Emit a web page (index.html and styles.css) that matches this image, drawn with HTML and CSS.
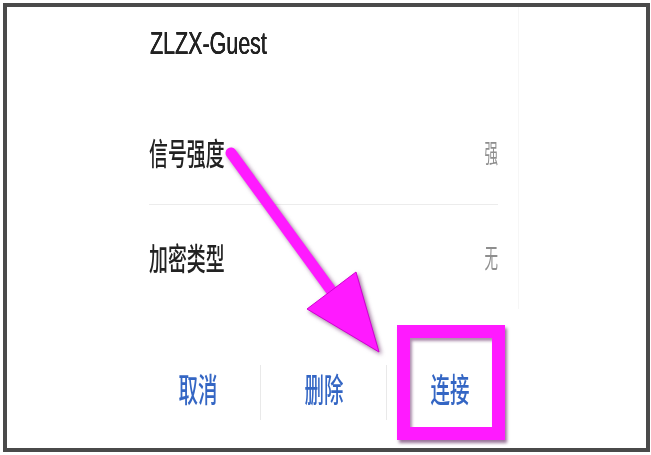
FILE: index.html
```html
<!DOCTYPE html>
<html lang="zh">
<head>
<meta charset="utf-8">
<title>ZLZX-Guest</title>
<link rel="stylesheet" href="styles.css">
</head>
<body>
<div class="frame">
  <div class="dialog">
    <div class="info">
      <div class="title"><span class="title-text">ZLZX-Guest</span></div>
      <div class="row row-first">
        <span class="label">信号强度</span>
        <span class="value">强</span>
      </div>
      <div class="divider"></div>
      <div class="row row-second">
        <span class="label">加密类型</span>
        <span class="value">无</span>
      </div>
    </div>
    <div class="buttons">
      <div class="btn"><span class="btn-text">取消</span></div>
      <div class="btn"><span class="btn-text">删除</span></div>
      <div class="btn btn-last"><span class="btn-text">连接</span></div>
    </div>
  </div>
  <svg class="arrow" width="639" height="441" viewBox="0 0 639 441">
    <line x1="224" y1="146" x2="326" y2="286" stroke="#ff1aff" stroke-width="11" stroke-linecap="round"/>
    <polygon points="300,302 372,345 349,265" fill="#ff1aff" stroke="#d000d0" stroke-width="1" stroke-linejoin="round"/>
  </svg>
  <div class="highlight"></div>
</div>
</body>
</html>
```

FILE: styles.css
```css
html, body {
  margin: 0;
  padding: 0;
  background: #ffffff;
}

body {
  font-family: "Noto Sans CJK SC", "Liberation Sans", sans-serif;
}

.frame {
  position: relative;
  box-sizing: border-box;
  width: 647px;
  height: 449px;
  margin: 3px 0 0 3px;
  border: 4px solid #4a4a4a;
  background: #ffffff;
  overflow: hidden;
}

.dialog {
  margin-left: 128px;
  width: 384px;
  display: flex;
  flex-direction: column;
}

.info {
  padding-top: 16px;
  padding-left: 14px;
  padding-bottom: 30px;
  border-right: 1px solid #f6f6f6;
  width: 349px;
  padding-right: 20px;
}

.title {
  height: 40px;
  line-height: 40px;
  font-family: "Liberation Sans", "Noto Sans CJK SC", sans-serif;
  font-size: 32px;
  color: #222222;
  white-space: nowrap;
  text-shadow: 0 0 0.6px #222222, 0.4px 0 0.4px #222222;
}

.title-text {
  display: inline-block;
  transform: scaleX(0.67);
  transform-origin: left center;
  margin-left: 1px;
}

.row {
  height: 44px;
  display: flex;
  justify-content: space-between;
  align-items: center;
  white-space: nowrap;
}

.row-first {
  margin-top: 67px;
}

.row-second {
  margin-top: 30px;
}

.label {
  display: inline-block;
  font-size: 31px;
  font-weight: 500;
  line-height: 44px;
  color: #222222;
  transform: scaleX(0.61);
  transform-origin: left center;
}

.value {
  display: inline-block;
  font-size: 26px;
  line-height: 44px;
  color: #8e8e8e;
  transform: scaleX(0.52);
  transform-origin: right center;
}

.divider {
  margin-top: 30px;
  height: 1px;
  background: #ececec;
}

.buttons {
  margin-top: 56px;
  display: flex;
}

.btn {
  flex: 0 0 126px;
  height: 55px;
  box-sizing: border-box;
  border-right: 1px solid #e9e9e9;
  text-align: center;
}

.btn-last {
  border-right: none;
}

.btn-text {
  display: inline-block;
  font-size: 33px;
  font-weight: 500;
  line-height: 46px;
  color: #3466c4;
  transform: scaleX(0.59);
  transform-origin: center center;
}

.arrow {
  position: absolute;
  left: 0;
  top: 0;
  filter: drop-shadow(2px 2px 2px rgba(70, 0, 70, 0.55));
  overflow: visible;
}

.highlight {
  position: absolute;
  left: 390px;
  top: 318px;
  width: 108px;
  height: 115px;
  box-sizing: border-box;
  border: 13px solid #ff1aff;
  box-shadow: 2px 3px 3px rgba(70, 0, 70, 0.55), inset 2px 3px 3px rgba(70, 0, 70, 0.45);
}
```
